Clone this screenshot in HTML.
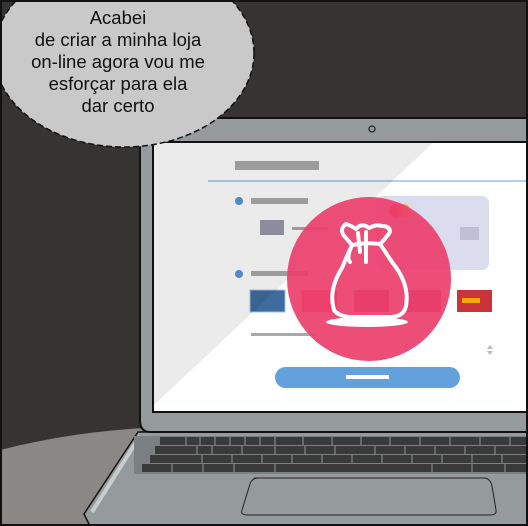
<!DOCTYPE html>
<html><head><meta charset="utf-8"><style>
html,body{margin:0;padding:0;background:#353432}
svg{display:block}
</style></head><body>
<svg width="528" height="526" viewBox="0 0 528 526" xmlns="http://www.w3.org/2000/svg">
<rect width="528" height="526" fill="#353432"/>
<path d="M0 450 Q70 432 145 428 L100 526 L0 526 Z" fill="#8a8784"/>
<path d="M138 432 L528 432 L528 526 L90 526 L84 514 Z" fill="#959b9c" stroke="#111" stroke-width="1.5"/>
<path d="M140 436 L92 512" stroke="#c9cdcd" stroke-width="4" fill="none"/>
<rect x="134" y="436" width="394" height="38" fill="#7b8182"/>
<g fill="#3a3939">
<rect x="160" y="437" width="368" height="8"/>
<rect x="155" y="446" width="373" height="8"/>
<rect x="150" y="455" width="378" height="8"/>
<rect x="142" y="464" width="386" height="8"/>
</g>
<g stroke="#7b8182" stroke-width="1.3">
<path d="M186 437v8M200 437v8M215 437v8M230 437v8M245 437v8M260 437v8M275 437v8M303 437v8M332 437v8M361 437v8M390 437v8M420 437v8M450 437v8M480 437v8M510 437v8"/>
<path d="M197 446v8M212 446v8M242 446v8M275 446v8M305 446v8M335 446v8M375 446v8M405 446v8M435 446v8M465 446v8M495 446v8"/>
<path d="M202 455v8M232 455v8M262 455v8M292 455v8M322 455v8M352 455v8M382 455v8M412 455v8M442 455v8M472 455v8M502 455v8"/>
<path d="M172 464v8M203 464v8M234 464v8M275 464v8M432 464v8M472 464v8M505 464v8"/>
</g>
<path d="M254 478 L484 478 Q490 478 492 486 L496 510 Q497 515 490 515 L248 515 Q240 515 242 510 L250 484 Q252 478 258 478 Z" fill="#959b9c" stroke="#222" stroke-width="1"/>
<path d="M155 118 L528 118 L528 432 L150 432 Q140 432 140 420 L140 130 Q140 118 155 118 Z" fill="#959b9c" stroke="#111" stroke-width="2"/>
<circle cx="372" cy="129" r="3" fill="none" stroke="#222" stroke-width="1.2"/>
<rect x="153" y="142" width="376" height="270" fill="#fff" stroke="#111" stroke-width="2"/>
<rect x="235" y="161" width="84" height="9" fill="#aaa"/>
<line x1="208" y1="181" x2="528" y2="181" stroke="#6a9fd8" stroke-width="1"/>
<circle cx="239" cy="201" r="4" fill="#5b95d6"/>
<rect x="251" y="198" width="57" height="6" fill="#aaa"/>
<rect x="260" y="220" width="24" height="15" fill="#9a98a8"/>
<rect x="292" y="227" width="36" height="3" fill="#aaa"/>
<rect x="376" y="196" width="113" height="74" rx="7" fill="#dcdcef"/>
<circle cx="396" cy="211" r="7" fill="#e9325a"/>
<circle cx="404" cy="211" r="7" fill="#f1a53a" opacity="0.8"/>
<rect x="460" y="227" width="19" height="13" fill="#c0bfd3"/>
<circle cx="239" cy="274" r="4" fill="#5b95d6"/>
<rect x="251" y="271" width="57" height="5" fill="#aaa"/>
<rect x="250" y="290" width="35" height="22" fill="#3f6c9f" stroke="#9ec0ea"/>
<rect x="302" y="290" width="35" height="22" fill="#e84040"/>
<rect x="354" y="290" width="35" height="22" fill="#c0346a"/>
<rect x="406" y="290" width="35" height="22" fill="#c0346a"/>
<rect x="457" y="290" width="35" height="22" fill="#c9343b"/>
<rect x="462" y="298" width="18" height="5" fill="#f5a800"/>
<rect x="251" y="333" width="65" height="3" fill="#aaa"/>
<rect x="275" y="367" width="185" height="21" rx="10.5" fill="#63a1dd"/>
<rect x="346" y="375" width="43" height="4" fill="#fff"/>
<path d="M490 345 l-3 4 h6 z M490 355 l-3 -4 h6 z" fill="#bbb"/>
<path d="M154 143 L433 143 L154 405 Z" fill="#000" opacity="0.08"/>
<circle cx="369" cy="279" r="82" fill="#ec3f6c" opacity="0.92"/>
<g fill="none" stroke="#fff" stroke-width="4" stroke-linecap="round" stroke-linejoin="round">
<path d="M346 238 Q338 230 346 224 Q352 226 356 229 Q362 222 369 228 Q376 224 382 226 Q390 226 390 232 Q386 238 380 244 Q366 242 352 245 Z"/>
<path d="M352 245 Q346 258 342 268 Q328 290 334 310 Q338 316 350 317 L392 317 Q404 316 406 306 Q410 284 392 262 Q384 250 380 244"/>
<path d="M358 233 L360 252 M366 232 L366 262"/>
<path d="M352 245 Q346 258 350 262"/>
</g>
<ellipse cx="367" cy="322" rx="41" ry="5" fill="#fff"/>
<ellipse cx="124" cy="53" rx="130" ry="94" fill="#c9c9c9" stroke="#111" stroke-width="1.5" stroke-dasharray="6 3"/>
<g font-family="Liberation Sans, sans-serif" font-size="18.5" fill="#111" text-anchor="middle">
<text x="118" y="24">Acabei</text>
<text x="118" y="46">de criar a minha loja</text>
<text x="118" y="68">on-line agora vou me</text>
<text x="118" y="90">esforçar para ela</text>
<text x="118" y="112">dar certo</text>
</g>
<rect x="1" y="1" width="526" height="524" fill="none" stroke="#111" stroke-width="2"/>
</svg>
</body></html>
